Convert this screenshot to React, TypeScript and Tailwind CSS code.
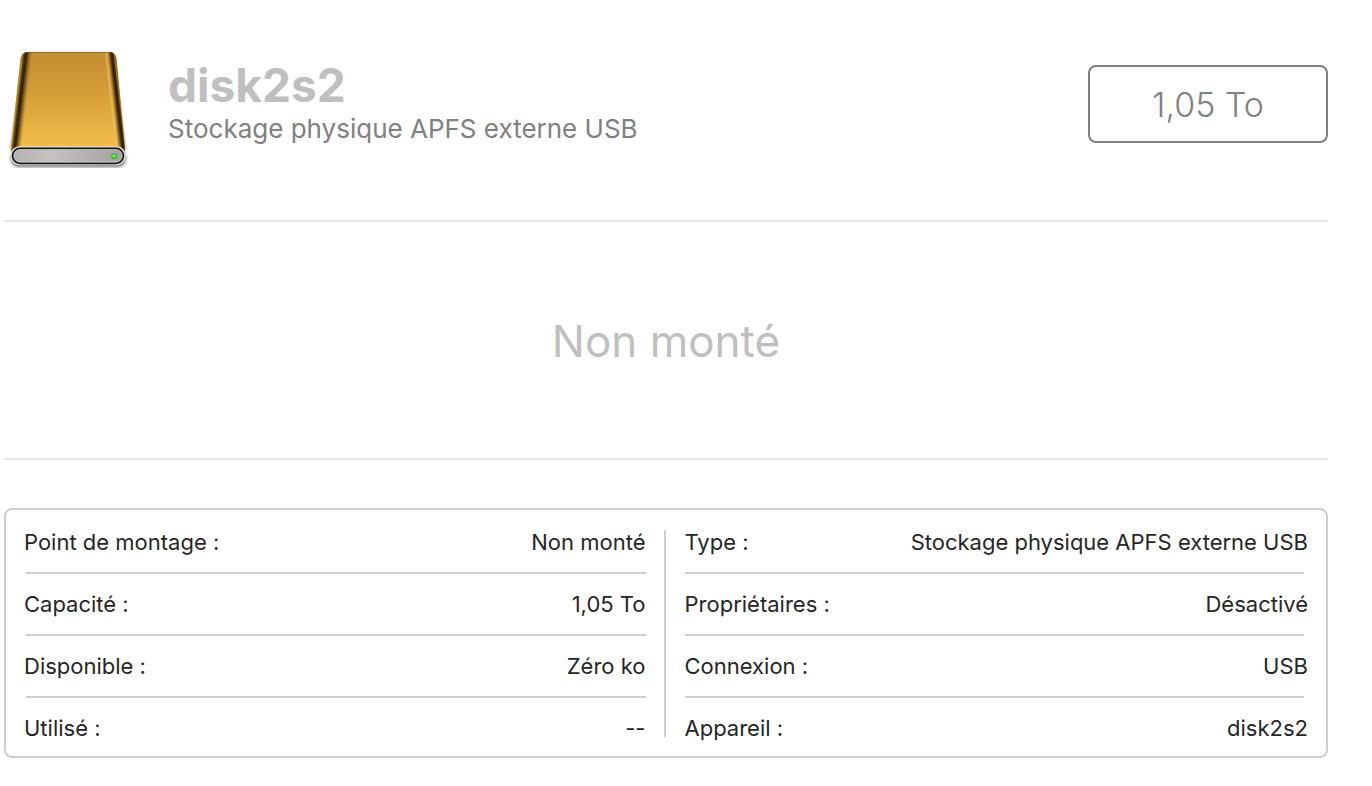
type Entry = {
  label: string;
  value: string;
};

const volumeInfo: Entry[] = [
  { label: "Point de montage :", value: "Non monté" },
  { label: "Capacité :", value: "1,05 To" },
  { label: "Disponible :", value: "Zéro ko" },
  { label: "Utilisé :", value: "--" },
];

const deviceInfo: Entry[] = [
  { label: "Type :", value: "Stockage physique APFS externe USB" },
  { label: "Propriétaires :", value: "Désactivé" },
  { label: "Connexion :", value: "USB" },
  { label: "Appareil :", value: "disk2s2" },
];

function DiskIcon({ className }: { className?: string }) {
  return (
    <svg className={className} width="140" height="128" viewBox="12 0 420 384" fill="none" aria-hidden>
      <defs>
        <linearGradient id="top" x1="0" y1="36" x2="0" y2="330" gradientUnits="userSpaceOnUse">
          <stop offset="0" stopColor="#c58d30" />
          <stop offset="0.45" stopColor="#d69f38" />
          <stop offset="1" stopColor="#f4c04b" />
        </linearGradient>
        <linearGradient id="left" x1="47" y1="180" x2="81" y2="184" gradientUnits="userSpaceOnUse">
          <stop offset="0" stopColor="#c8922a" />
          <stop offset="0.14" stopColor="#b07d20" />
          <stop offset="0.28" stopColor="#4a340a" />
          <stop offset="0.45" stopColor="#2a1d04" />
          <stop offset="0.7" stopColor="#7a5716" stopOpacity="0.8" />
          <stop offset="1" stopColor="#b58428" stopOpacity="0" />
        </linearGradient>
        <linearGradient id="right" x1="329" y1="184" x2="363" y2="180" gradientUnits="userSpaceOnUse">
          <stop offset="0" stopColor="#f3c765" stopOpacity="0" />
          <stop offset="0.18" stopColor="#f0c464" stopOpacity="0.7" />
          <stop offset="0.42" stopColor="#9c7020" />
          <stop offset="0.64" stopColor="#281b04" />
          <stop offset="0.78" stopColor="#3d2a07" />
          <stop offset="0.9" stopColor="#a97619" />
          <stop offset="1" stopColor="#8d6113" />
        </linearGradient>
        <linearGradient id="front" x1="40" y1="0" x2="370" y2="0" gradientUnits="userSpaceOnUse">
          <stop offset="0" stopColor="#b4b3af" />
          <stop offset="0.35" stopColor="#c3c2be" />
          <stop offset="1" stopColor="#a3a29e" />
        </linearGradient>
        <filter id="soft" x="-20%" y="-50%" width="140%" height="200%">
          <feGaussianBlur stdDeviation="5" />
        </filter>
      </defs>
      <path d="M70 50H342L378 330H30Z" fill="#000" opacity="0.3" filter="url(#soft)" />
      <rect x="32" y="328" width="346" height="54" rx="25" fill="#000" opacity="0.5" filter="url(#soft)" />
      <path
        d="M86 36H328C340 36 346 42 349 54L375 322V346H33V322L62 54C65 42 72 36 86 36Z"
        fill="url(#top)"
      />
      <path d="M86 36C72 36 65 42 62 54L33 322V340H64L98 36Z" fill="url(#left)" />
      <path d="M314 36H328C340 36 346 42 349 54L375 322V340H344Z" fill="url(#right)" />
      <path d="M82 37H330" stroke="#8a5f1b" strokeWidth="2" />
      <rect x="31" y="318" width="347" height="58" rx="29" fill="#d6d5d2" />
      <rect x="38" y="325" width="332" height="45" rx="22" fill="url(#front)" stroke="#10151a" strokeWidth="5" />
      <rect x="42" y="329" width="324" height="37" rx="18" stroke="#d3d2cf" strokeWidth="2" />
      <circle cx="343" cy="349" r="10" fill="#7e9c76" />
      <circle cx="343" cy="349" r="8" fill="#31c92b" />
      <circle cx="342" cy="348" r="4" fill="#8af26a" />
    </svg>
  );
}

function InfoList({ entries, rowClassName }: { entries: Entry[]; rowClassName: string }) {
  return (
    <dl className="min-w-0 flex-1 divide-y-2 divide-[#cecece] pt-0.5">
      {entries.map((entry) => (
        <div key={entry.label} className="pt-4 pb-4 last:pb-3.5">
          <div className={`flex justify-between gap-4 ${rowClassName}`}>
            <dt>{entry.label}</dt>
            <dd className="text-right">{entry.value}</dd>
          </div>
        </div>
      ))}
    </dl>
  );
}

export default function App() {
  return (
    <main className="bg-white pr-11 pb-7 pl-1 font-['Inter',sans-serif] text-[#262626]">
      <header className="flex items-center border-b-2 border-[#e5e5e5] pt-10 pb-[52px]">
        <DiskIcon className="shrink-0" />
        <div className="ml-6 min-w-0 flex-1">
          <h1 className="pt-0.5 text-[46px] leading-12 font-bold text-[#bfbfbf]">disk2s2</h1>
          <p className="text-[26px] leading-10 text-[#808080]">Stockage physique APFS externe USB</p>
        </div>
        <div className="flex h-[78px] w-60 shrink-0 items-center justify-center rounded-lg border-2 border-[#808080] text-[34px] font-light text-[#808080]">
          1,05 To
        </div>
      </header>

      <section className="flex h-[238px] items-center justify-center border-b-2 border-[#e5e5e5] pt-0.5 text-[44px] text-[#bfbfbf]">
        Non monté
      </section>

      <section className="mt-12 flex rounded-lg border-2 border-[#cecece] pr-[22px] pl-5 text-[22px] leading-7">
        <InfoList entries={volumeInfo} rowClassName="-ml-0.5" />
        <div className="mr-[19px] ml-[18px] mt-5 mb-[19px] w-0.5 bg-[#cecece]" />
        <InfoList entries={deviceInfo} rowClassName="-mr-1" />
      </section>
    </main>
  );
}
